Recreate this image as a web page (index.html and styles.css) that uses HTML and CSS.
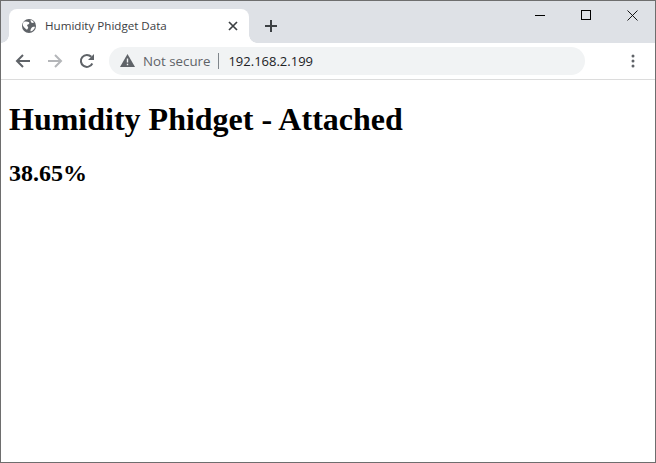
FILE: index.html
```html
<!DOCTYPE html>
<html lang="en">
<head>
<meta charset="utf-8">
<title>Humidity Phidget Data</title>
<link rel="stylesheet" href="styles.css">
</head>
<body>
<div class="window">
  <header class="tabstrip">
    <div class="tab">
      <svg class="favicon" width="16" height="16" viewBox="0 0 16 16"><circle cx="8" cy="8" r="7" fill="#5f6368"/><path d="M2.500 4C4.500 3.300 6.500 3.500 8 4.300 8.800 5.300 8 6.300 6.800 6.500 5.800 7 6 8 7 8.700 7.500 9.700 6.800 10.700 6 11.800 4.500 10.800 3 9.500 2 7.800 1.800 6.300 2 5 2.500 4ZM9.800 13.500C9.300 12.500 9.500 11.500 10 10.700 10.500 9.800 11.300 9 12.300 8.800 13 8.800 13.600 8.800 14 8.800 13.700 10.800 12.200 12.800 9.800 13.500ZM9.500 2C11 2.300 12.300 3.200 13 4.500 12.300 5 11.300 5 10.500 4.800 9.900 4 9.500 3 9.500 2Z" fill="#fff"/></svg>
      <span class="tab-title">Humidity Phidget Data</span>
      <svg class="tab-close" width="10" height="10" viewBox="0 0 10 10"><path d="M1 1L9 9M9 1L1 9" stroke="#3c4043" stroke-width="1.700" fill="none"/></svg>
    </div>
    <svg class="new-tab" width="14" height="14" viewBox="0 0 14 14"><path d="M7 1V13M1 7H13" stroke="#3c4043" stroke-width="2" fill="none"/></svg>
    <div class="caption">
      <span class="caption-btn"><svg width="11" height="11" viewBox="0 0 11 11"><path d="M0 5.500H10" stroke="#000" fill="none"/></svg></span>
      <span class="caption-btn"><svg width="11" height="11" viewBox="0 0 11 11"><rect x="0.500" y="0.500" width="9" height="9" stroke="#000" fill="none"/></svg></span>
      <span class="caption-btn"><svg width="11" height="11" viewBox="0 0 11 11"><path d="M0.500 0.500L10.500 10.500M10.500 0.500L0.500 10.500" stroke="#000" stroke-width="0.900" fill="none"/></svg></span>
    </div>
  </header>
  <nav class="toolbar">
    <svg class="nav-icon" width="16" height="16" viewBox="0 0 16 16"><path d="M15 8H2M8 2L2 8L8 14" stroke="#5f6368" stroke-width="2" fill="none"/></svg>
    <svg class="nav-icon" width="16" height="16" viewBox="0 0 16 16"><path d="M1 8H14M8 2L14 8L8 14" stroke="#b4b6b9" stroke-width="2" fill="none"/></svg>
    <svg class="nav-icon" width="16" height="16" viewBox="0 0 16 16"><path d="M13.300 10.500A6 6 0 1 1 12.300 3.800" stroke="#5f6368" stroke-width="2" fill="none"/><path d="M15 1V7H9Z" fill="#5f6368"/></svg>
    <div class="omnibox">
      <svg class="warn" width="15" height="13" viewBox="0 0 15 13"><path d="M7.500 0L15 13H0Z" fill="#5f6368"/><path d="M7.500 4.500V8.500M7.500 9.700V11.200" stroke="#f1f3f4" stroke-width="1.400" fill="none"/></svg>
      <span class="not-secure">Not secure</span>
      <span class="divider"></span>
      <span class="url">192.168.2.199</span>
    </div>
    <svg class="menu" width="4" height="14" viewBox="0 0 4 14"><circle cx="2" cy="2" r="1.500" fill="#5f6368"/><circle cx="2" cy="7" r="1.500" fill="#5f6368"/><circle cx="2" cy="12" r="1.500" fill="#5f6368"/></svg>
  </nav>
  <main class="content">
    <h1>Humidity Phidget - Attached</h1>
    <h2>38.65%</h2>
  </main>
</div>
</body>
</html>
```
FILE: styles.css
```css
* { box-sizing: border-box; }
html, body { margin: 0; height: 100%; }
.window {
  height: 463px;
  width: 656px;
  border: 1px solid #6e6e6e;
  display: flex;
  flex-direction: column;
  background: #fff;
  overflow: hidden;
}
.tabstrip {
  height: 42px;
  flex: none;
  background: #dee1e6;
  display: flex;
  align-items: flex-end;
  padding-left: 8px;
}
.tab {
  position: relative;
  width: 240px;
  height: 34px;
  background: #fff;
  border-radius: 8px 8px 0 0;
  display: flex;
  align-items: center;
  padding: 0 11px 0 12px;
  font: 11.600px "Open Sans", "Noto Sans", sans-serif;
  color: #3c4043;
}
.tab::before, .tab::after {
  content: "";
  position: absolute;
  bottom: 0;
  width: 8px;
  height: 8px;
}
.tab::before { left: -8px; background: radial-gradient(circle at 0 0, transparent 7.500px, #fff 8px); }
.tab::after { right: -8px; background: radial-gradient(circle at 100% 0, transparent 7.500px, #fff 8px); }
.favicon { flex: none; }
.tab-title { margin: 0 0 2px 8px; flex: 1; white-space: nowrap; }
.tab-close { flex: none; }
.new-tab { margin: 0 0 10px 15px; flex: none; }
.caption {
  margin-left: auto;
  align-self: flex-start;
  display: flex;
}
.caption-btn {
  width: 46px;
  height: 28px;
  display: flex;
  align-items: center;
  justify-content: center;
}
.toolbar {
  height: 37px;
  flex: none;
  border-bottom: 1px solid #dcdcdc;
  display: flex;
  align-items: center;
  padding: 0 0 1px 14px;
  background: #fff;
}
.nav-icon { flex: none; margin-right: 16px; }
.nav-icon:nth-of-type(3) { margin-right: 14px; }
.omnibox {
  width: 476px;
  height: 28px;
  border-radius: 14px;
  background: #f1f3f4;
  display: flex;
  align-items: center;
  padding-left: 11px;
  font: 14px "Open Sans", "Noto Sans", sans-serif;
}
.not-secure { margin-left: 8px; color: #5f6368; font-size: 13.300px; }
.divider { width: 1px; height: 16px; background: #80868b; margin: 0 9px 0 8px; }
.url { color: #202124; font-size: 13px; }
.menu { flex: none; margin-left: 46px; }
.content { padding: 0 8px; flex: 1; font-family: "Liberation Serif", serif; color: #000; }
h1 { font-size: 32px; font-weight: bold; margin: 21px 0 22px; }
h2 { font-size: 24px; font-weight: bold; margin: 22px 0 0; }
```
